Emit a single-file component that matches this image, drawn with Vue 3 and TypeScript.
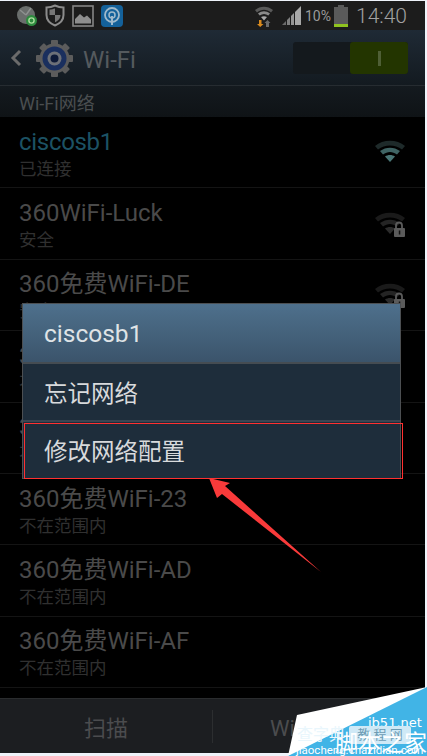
<template>
  <div class="page">
    <div class="screen">
      <!-- status bar -->
      <div class="status">
        <div class="status-left">
          <svg width="22" height="22" viewBox="0 0 22 22">
            <circle cx="10" cy="10" r="9" fill="#6a6e6c" />
            <path d="M10 10 L4 5 M10 10 L15 3" stroke="#8d918f" stroke-width="1.5" />
            <circle cx="15.500" cy="15.500" r="5.500" fill="#2d8a3e" />
            <circle cx="15.500" cy="15.500" r="2.600" fill="none" stroke="#a9dd9c" stroke-width="1.400" />
          </svg>
          <svg width="20" height="23" viewBox="0 0 20 23">
            <path d="M10 1.500 C7 3 4 3.500 1.500 3.500 V11 C1.500 16 5 19.500 10 21.500 C15 19.500 18.500 16 18.500 11 V3.500 C16 3.500 13 3 10 1.500 Z" fill="none" stroke="#8c8c8c" stroke-width="2" />
            <path d="M10 4.500 V11 H4.500 V5.500 C6.500 5.500 8.500 5 10 4.500 Z M10 11 H15.500 C15.500 14.500 13 17 10 18.300 Z" fill="#777" />
          </svg>
          <svg width="22" height="22" viewBox="0 0 22 22">
            <rect x="1" y="1" width="20" height="20" fill="none" stroke="#858585" stroke-width="1.600" />
            <path d="M3 18.500 V14 L8 9 L12 12.500 L15 10.500 L19 14.500 V18.500 Z" fill="#8e8e8e" />
          </svg>
          <svg width="22" height="22" viewBox="0 0 22 22">
            <rect x="0" y="0" width="22" height="22" rx="4" fill="#14619a" />
            <circle cx="11" cy="10" r="7" fill="none" stroke="#9fb9cb" stroke-width="1.800" />
            <circle cx="11" cy="10" r="3" fill="none" stroke="#9fb9cb" stroke-width="1.500" />
            <rect x="10" y="11" width="2" height="9" fill="#9fb9cb" />
          </svg>
        </div>
        <div class="status-right">
          <svg class="st-wifi" width="20" height="22" viewBox="0 0 20 22">
            <path d="M1 5 C6 0.500 14 0.500 19 5 L17 7.500 C12.500 3.800 7.500 3.800 3 7.500 Z" fill="#5a5a5a" />
            <path d="M4 8.500 C8 5.500 12 5.500 16 8.500 L14.300 10.500 C11.500 8.500 8.500 8.500 5.700 10.500 Z" fill="#8a8a8a" />
            <path d="M7 12 C9 11 11 11 13 12 L10 15.500 Z" fill="#a8a8a8" />
            <path d="M5 15 H7.500 V19 H9.500 L6.200 22 L3 19 H5 Z" fill="#d98a1e" />
            <path d="M12 22 V18 H10.500 L13.500 15 L16.500 18 H15 V22 Z" fill="#6c6c6c" />
          </svg>
          <svg class="st-signal" width="20" height="20" viewBox="0 0 20 20">
            <path d="M0 19 L4 15 V19 Z" fill="#6a6a6a" />
            <path d="M5 14 L8 11 V19 H5 Z" fill="#808080" />
            <path d="M9 10 L12 7 V19 H9 Z" fill="#969696" />
            <path d="M13 6 L19 0 V19 H13 Z" fill="#a8a8a8" />
          </svg>
          <span class="st-pct">10%</span>
          <svg class="st-batt" width="14" height="22" viewBox="0 0 14 22">
            <rect x="4" y="0" width="6" height="2" fill="#5a5a5a" />
            <rect x="0" y="2" width="14" height="20" fill="#5a5a5a" />
            <rect x="0" y="19" width="14" height="3" fill="#8fc31f" />
          </svg>
          <span class="st-time">14:40</span>
        </div>
      </div>

      <!-- action bar -->
      <div class="bar">
        <svg class="back" width="12" height="18" viewBox="0 0 12 18">
          <path d="M10 2 L3 9 L10 16" fill="none" stroke="#6b6b6b" stroke-width="3" />
        </svg>
        <svg class="gear" width="37" height="37" viewBox="0 0 37 37">
          <g fill="#5c5c5c">
            <rect v-for="a in gearTeeth" :key="a" x="15" y="0" width="7" height="37" rx="1" :transform="`rotate(${a} 18.500 18.500)`" />
          </g>
          <circle cx="18.500" cy="18.500" r="15" fill="#5c5c5c" />
          <circle cx="18.500" cy="18.500" r="12" fill="#1a2f5e" />
          <circle cx="18.500" cy="18.500" r="7" fill="#6c7078" />
          <circle cx="18.500" cy="18.500" r="4" fill="#0e1a38" />
        </svg>
        <span class="bar-title">Wi-Fi</span>
        <div class="switch">
          <div class="switch-on"><i></i></div>
        </div>
      </div>

      <div class="section">Wi-Fi网络</div>

      <!-- networks -->
      <div class="list">
        <div v-for="n in networks" :key="n.name" class="row">
          <div class="row-text">
            <div class="row-name" :class="{ active: n.active }">{{ n.name }}</div>
            <div class="row-sub">{{ n.sub }}</div>
          </div>
          <svg v-if="n.signal" class="row-wifi" width="32" height="30" viewBox="0 0 32 30">
            <path d="M1 9 C9 2 23 2 31 9 L28 12.500 C21 7 11 7 4 12.500 Z" :fill="n.active ? '#1e2a2a' : '#1a1a1a'" />
            <path d="M6 14 C12 9.500 20 9.500 26 14 L23 17.500 C18.500 14 13.500 14 9 17.500 Z" :fill="n.active ? '#3f6464' : '#242424'" />
            <path d="M11 19.500 C14 17.500 18 17.500 21 19.500 L16 25 Z" :fill="n.active ? '#4a7676' : '#2c2c2c'" />
            <g v-if="n.locked">
              <path d="M22 19 V16.500 C22 12.500 28 12.500 28 16.500 V19" fill="none" stroke="#5b5b5b" stroke-width="1.800" />
              <rect x="20" y="19" width="11" height="9" rx="1" fill="#5b5b5b" />
              <rect x="24.800" y="21.500" width="1.500" height="4" fill="#111" />
            </g>
          </svg>
        </div>
      </div>

      <!-- bottom buttons -->
      <div class="bottom">
        <div class="bottom-btn">扫描</div>
        <div class="bottom-sep"></div>
        <div class="bottom-btn">Wi-Fi 直连</div>
      </div>

      <!-- context dialog -->
      <div class="dialog">
        <div class="dialog-title">ciscosb1</div>
        <div class="dialog-item">忘记网络</div>
        <div class="dialog-item last">修改网络配置</div>
      </div>
      <div class="highlight"></div>

      <!-- annotation arrow -->
      <svg class="arrow" width="120" height="105" viewBox="0 0 120 105">
        <path d="M0 0 L21 5 L16 8 L112 94 L13 16 L8 20 Z" fill="#f93a3a" />
      </svg>
    </div>

    <!-- corner watermark -->
    <div class="mark">
      <svg class="mark-bg" width="139" height="69" viewBox="0 0 139 69">
        <path d="M139 0 V69 H0 L9 28 Z" fill="#fff" />
        <path d="M139 0 V69 H0 Z" fill="#41b4e6" />
      </svg>
      <span class="mark-jb">jb51.net</span>
      <span class="mark-box">教 程 网</span>
      <span class="mark-big">脚本之家</span>
      <span class="mark-cz">查字典</span>
      <span class="mark-url">jiaocheng.chazidian.com</span>
    </div>
  </div>
</template>

<script setup lang="ts">
interface Network {
  name: string
  sub: string
  active?: boolean
  signal?: boolean
  locked?: boolean
}

const gearTeeth = [0, 45, 90, 135]

const networks: Network[] = [
  { name: 'ciscosb1', sub: '已连接', active: true, signal: true },
  { name: '360WiFi-Luck', sub: '安全', signal: true, locked: true },
  { name: '360免费WiFi-DE', sub: '安全', signal: true, locked: true },
  { name: '360免费WiFi-6A', sub: '不在范围内' },
  { name: '360免费WiFi-12', sub: '不在范围内' },
  { name: '360免费WiFi-23', sub: '不在范围内' },
  { name: '360免费WiFi-AD', sub: '不在范围内' },
  { name: '360免费WiFi-AF', sub: '不在范围内' },
]
</script>

<style>
html,
body {
  margin: 0;
  background: #eef3fa;
}
</style>

<style scoped>
.page {
  position: relative;
  width: 427px;
  height: 756px;
  padding-top: 1px;
  box-sizing: border-box;
  overflow: hidden;
  background: #eef3fa;
  font-family: Roboto, "Noto Sans CJK SC", sans-serif;
}

.screen {
  position: relative;
  width: 425px;
  height: 752px;
  display: flex;
  flex-direction: column;
  background: #000;
}

.status {
  height: 29px;
  flex: none;
  display: flex;
  align-items: center;
  justify-content: space-between;
  background: #1c1c1c;
}

.status-left {
  display: flex;
  align-items: center;
  gap: 7px;
  padding-left: 16px;
}

.status-right {
  display: flex;
  align-items: center;
  padding-right: 18px;
}

.st-wifi {
  margin-right: 8px;
}

.st-signal {
  margin-right: 3px;
}

.st-pct {
  font-size: 14px;
  color: #9a9a9a;
  margin-right: 3px;
}

.st-batt {
  margin-right: 8px;
}

.st-time {
  font-size: 21px;
  font-weight: 300;
  color: #a2a2a2;
}

.bar {
  height: 56px;
  flex: none;
  display: flex;
  align-items: center;
  padding: 1px 17px 0 10px;
  box-sizing: border-box;
  background: linear-gradient(#1f2a35, #131a20);
  border-bottom: 1px solid #262c31;
}

.back {
  margin-right: 14px;
}

.gear {
  margin-right: 10px;
}

.bar-title {
  font-size: 24px;
  color: #555a5e;
  padding-top: 3px;
}

.switch {
  margin-left: auto;
  width: 115px;
  height: 32px;
  display: flex;
  justify-content: flex-end;
  border-radius: 3px;
  background: #14191d;
}

.switch-on {
  width: 58px;
  display: flex;
  align-items: center;
  justify-content: center;
  border-radius: 3px;
  background: #233500;
}

.switch-on i {
  width: 3px;
  height: 15px;
  background: #4f5f35;
}

.section {
  height: 31px;
  flex: none;
  display: flex;
  align-items: center;
  padding-left: 19px;
  font-size: 18px;
  color: #4a4e50;
  background: linear-gradient(#141a1f, #0f1316);
}

.list {
  flex: 1;
  min-height: 0;
  overflow: hidden;
}

.row {
  height: 71.400px;
  box-sizing: border-box;
  display: flex;
  align-items: center;
  justify-content: space-between;
  padding: 0 19px;
  border-bottom: 1px solid #141414;
}

.row-text {
  padding-top: 3px;
}

.row-name {
  font-size: 24px;
  line-height: 30px;
  color: #4a4a4a;
}

.row-name.active {
  color: #1c5264;
  letter-spacing: -0.3px;
}

.row-sub {
  font-size: 17.500px;
  line-height: 24px;
  color: #303030;
}

.row-wifi {
  flex: none;
}

.bottom {
  height: 54px;
  flex: none;
  display: flex;
  align-items: center;
  background: #1c1e21;
  border-top: 1px solid #2a2c2e;
}

.bottom-btn {
  flex: 1;
  text-align: center;
  font-size: 22px;
  color: #4b4c4e;
}

.bottom-sep {
  width: 1px;
  height: 33px;
  background: #2c2e30;
}

.dialog {
  position: absolute;
  left: 22px;
  top: 302px;
  width: 379px;
  display: flex;
  flex-direction: column;
  box-sizing: border-box;
  border: 1px solid #4c4f52;
  background: #1e2d3b;
}

.dialog-title {
  height: 58px;
  display: flex;
  align-items: center;
  padding-left: 21px;
  font-size: 24.500px;
  color: #dfe3e6;
  background: linear-gradient(#4e708c, #3b546b);
  border-bottom: 2px solid #454c52;
}

.dialog-item {
  height: 56px;
  display: flex;
  align-items: center;
  padding-left: 21px;
  font-size: 23.500px;
  color: #d8dadc;
  border-bottom: 2px solid #3a4652;
}

.dialog-item.last {
  border-bottom: 0;
}

.highlight {
  position: absolute;
  left: 24px;
  top: 422px;
  width: 379px;
  height: 56px;
  box-sizing: border-box;
  border: 1px solid #ff3030;
}

.arrow {
  position: absolute;
  left: 209px;
  top: 477px;
}

.mark {
  position: absolute;
  right: 0;
  bottom: 0;
  width: 139px;
  height: 69px;
  overflow: hidden;
  color: #fff;
}

.mark-bg {
  position: absolute;
  left: 0;
  top: 0;
}

.mark-jb {
  position: absolute;
  left: 80px;
  top: 28px;
  font-size: 13px;
  font-family: "DejaVu Sans", sans-serif;
  white-space: nowrap;
}

.mark-box {
  position: absolute;
  left: 61px;
  top: 39px;
  width: 62px;
  height: 18px;
  line-height: 18px;
  text-align: center;
  font-size: 13px;
  color: #6d9bb3;
  background: #cfe9f6;
  border-radius: 2px;
  white-space: nowrap;
}

.mark-big {
  position: absolute;
  left: 47px;
  top: 45px;
  font-size: 23px;
  line-height: 24px;
  white-space: nowrap;
}

.mark-cz {
  position: absolute;
  left: 9px;
  top: 38px;
  font-size: 16px;
  line-height: 20px;
  color: #e9f6fc;
  white-space: nowrap;
}

.mark-url {
  position: absolute;
  left: 8px;
  top: 56px;
  font-size: 11.500px;
  line-height: 14px;
  white-space: nowrap;
}
</style>
